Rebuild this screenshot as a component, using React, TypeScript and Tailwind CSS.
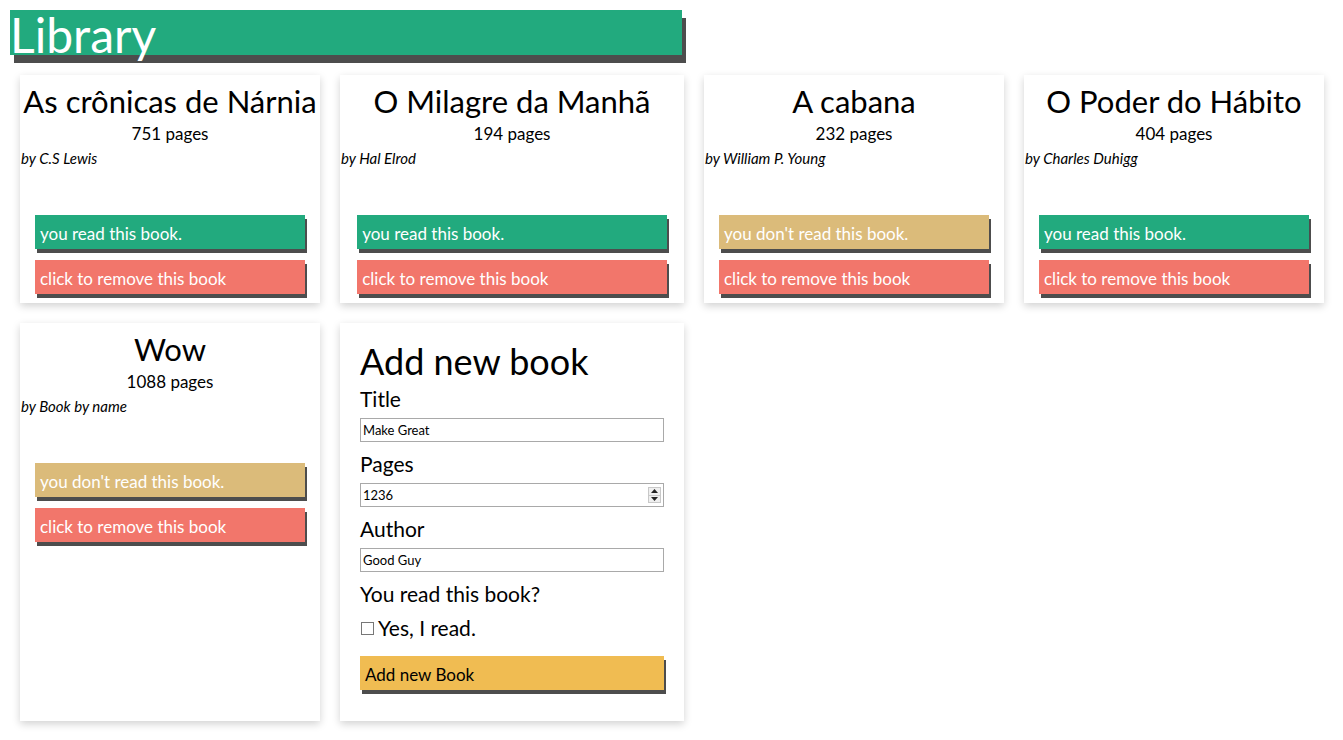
import React from "react";

type Book = { title: string; pages: number; author: string; read: boolean };

const books: Book[] = [
  { title: "As crônicas de Nárnia", pages: 751, author: "C.S Lewis", read: true },
  { title: "O Milagre da Manhã", pages: 194, author: "Hal Elrod", read: true },
  { title: "A cabana", pages: 232, author: "William P. Young", read: false },
  { title: "O Poder do Hábito", pages: 404, author: "Charles Duhigg", read: true },
  { title: "Wow", pages: 1088, author: "Book by name", read: false },
];

const font = { fontFamily: "Lato, 'Open Sans', sans-serif" };

function BookCard({ b }: { b: Book }) {
  return (
    <div className="bg-white shadow-[0_3px_8px_rgba(0,0,0,0.18)] pt-[6px] pb-[9px] flex flex-col">
      <h2 className="text-center text-[31px] leading-[40px] text-black whitespace-nowrap">{b.title}</h2>
      <p className="text-center text-[17px] leading-[26px] text-black">{b.pages} pages</p>
      <p className="italic text-[15px] leading-[22px] text-black pl-[1px]">by {b.author}</p>
      <button
        className={`mt-[46px] w-[90%] mx-auto h-[34px] text-left pl-[5px] pt-[3px] text-[17px] text-white shadow-[2px_4px_0_#4d4d4d] ${
          b.read ? "bg-[#22aa7e]" : "bg-[#dbbb7a]"
        }`}
      >
        {b.read ? "you read this book." : "you don't read this book."}
      </button>
      <button className="mt-[11px] w-[90%] mx-auto h-[34px] text-left pl-[5px] pt-[3px] text-[17px] text-white bg-[#f2766b] shadow-[2px_4px_0_#4d4d4d]">
        click to remove this book
      </button>
    </div>
  );
}

function AddForm() {
  return (
    <div className="bg-white shadow-[0_3px_8px_rgba(0,0,0,0.18)] pt-[16px] px-[20px] pb-[31px] flex flex-col">
      <h2 className="text-[36px] leading-[44px] text-black">Add new book</h2>
      <label className="mt-[2px] mb-[5px] text-[21px] leading-[28px] text-black">Title</label>
      <input
        className="h-[24px] w-full border border-[#a9a9a9] px-[2px] text-[13px] text-black outline-none"
        defaultValue="Make Great"
      />
      <label className="mt-[8px] mb-[5px] text-[21px] leading-[28px] text-black">Pages</label>
      <div className="h-[24px] w-full border border-[#a9a9a9] flex items-center pr-[2px]">
        <input className="flex-1 min-w-0 h-full px-[2px] text-[13px] text-black outline-none" defaultValue="1236" />
        <div className="w-[13px] h-[16px] border border-[#c8c8c8] bg-[#efefef] flex flex-col">
          <div className="flex-1 flex items-center justify-center border-b border-[#c8c8c8]">
            <svg width="7" height="4" viewBox="0 0 7 4"><path d="M3.5 0L7 4H0z" fill="#222" /></svg>
          </div>
          <div className="flex-1 flex items-center justify-center">
            <svg width="7" height="4" viewBox="0 0 7 4"><path d="M0 0h7L3.5 4z" fill="#222" /></svg>
          </div>
        </div>
      </div>
      <label className="mt-[8px] mb-[5px] text-[21px] leading-[28px] text-black">Author</label>
      <input
        className="h-[24px] w-full border border-[#a9a9a9] px-[2px] text-[13px] text-black outline-none"
        defaultValue="Good Guy"
      />
      <p className="mt-[8px] text-[21px] leading-[28px] text-black">You read this book?</p>
      <label className="mt-[6px] flex items-center text-[21px] leading-[28px] text-black">
        <input type="checkbox" className="appearance-none w-[13px] h-[13px] border border-[#777] bg-white ml-[1px] mr-[4px]" />
        Yes, I read.
      </label>
      <button className="mt-[14px] h-[34px] w-full text-left pl-[5px] pt-[3px] text-[17px] text-black bg-[#f0bc52] shadow-[2px_4px_0_#4d4d4d]">
        Add new Book
      </button>
    </div>
  );
}

export default function App() {
  return (
    <div className="min-h-[740px] bg-white" style={font}>
      <div className="pt-[10px] pl-[10px]">
        <h1 className="w-[672px] h-[45px] bg-[#22aa7e] text-white text-[48px] leading-[50px] shadow-[4px_8px_0_#4d4d4d] overflow-visible">
          Library
        </h1>
      </div>
      <div className="grid grid-cols-[300px_344px_300px_300px] gap-[20px] pl-[20px] pt-[20px] pb-[20px]">
        {books.slice(0, 4).map((b) => (
          <BookCard key={b.title} b={b} />
        ))}
        <BookCard b={books[4]} />
        <AddForm />
      </div>
    </div>
  );
}
